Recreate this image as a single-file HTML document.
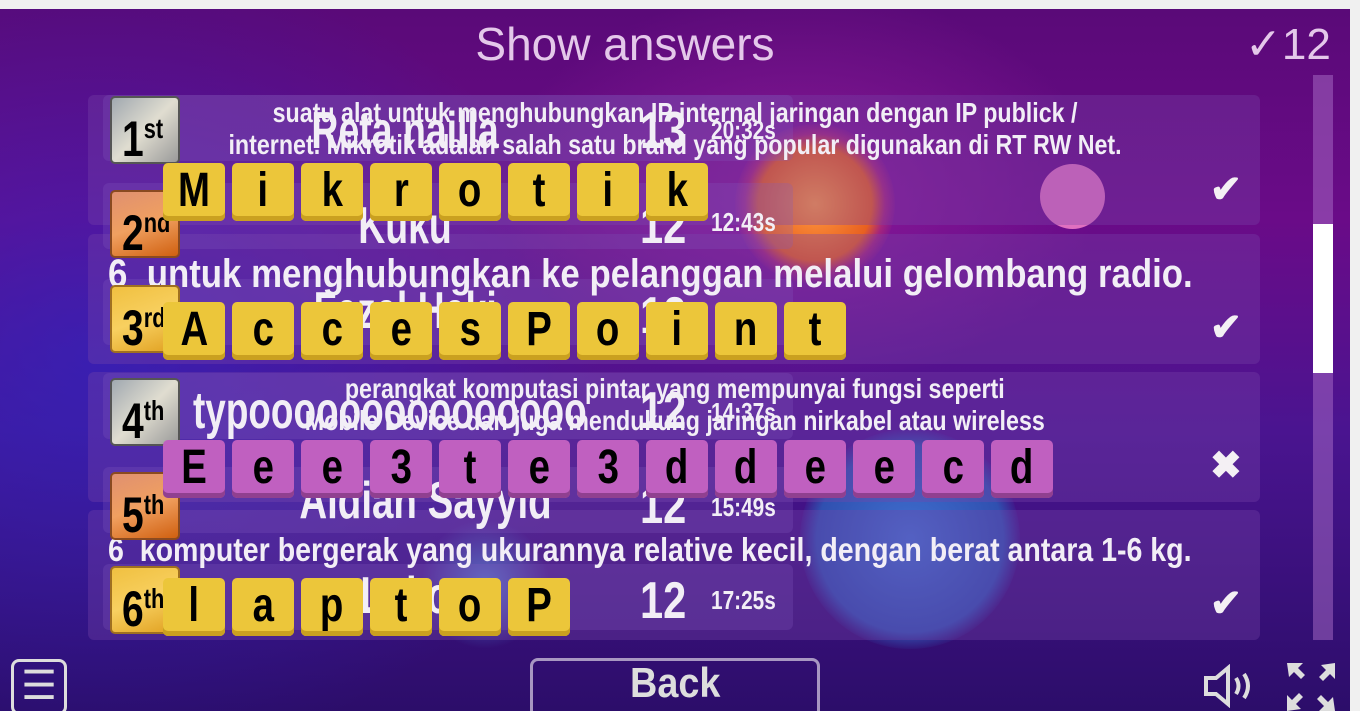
<!DOCTYPE html>
<html><head><meta charset="utf-8"><style>
*{margin:0;padding:0;box-sizing:border-box}
body{width:1360px;height:711px;overflow:hidden;background:#f0f0f0;position:relative;font-family:"Liberation Sans",sans-serif}
#g{position:absolute;left:0;top:9px;width:1350px;height:702px;overflow:hidden;
background:radial-gradient(ellipse 300px 200px at 800px 180px,rgba(170,40,170,.5),transparent),
radial-gradient(ellipse 500px 400px at 100px 350px,rgba(40,40,200,.6),transparent),
linear-gradient(180deg,#5a0a78 0%,#6a0b88 30%,#4a1490 60%,#2c0d6a 100%)}
.a{position:absolute}
.t{color:#f2eef6;font-weight:bold;white-space:nowrap;text-align:center}
.c{display:inline-block;transform:scaleX(.8);transform-origin:center}
.l{display:inline-block;transform:scaleX(.8);transform-origin:left}
.pan{position:absolute;left:88px;width:1172px;height:130px;background:rgba(120,70,170,.35);border-radius:6px}
.lb{position:absolute;left:103px;width:690px;height:66px;background:rgba(130,90,190,.25);border-radius:6px}
.b{position:absolute;left:110px;width:70px;height:68px;border-radius:5px;border:2px solid #555;font-weight:bold;font-size:50px;color:#000;padding-left:10px;line-height:62px;white-space:nowrap}
.b span{display:inline-block;transform:scaleX(.78);transform-origin:left}
.b sup{font-size:28px;vertical-align:18px}
.row{position:absolute;left:163px;display:flex;gap:7px}
.tile{width:62px;height:58px;border-radius:5px;font-weight:bold;font-size:48px;color:#000;text-align:center;line-height:56px}
.tile span{display:inline-block;transform:scaleX(.8)}
.y .tile{background:#ecc63a;box-shadow:inset 0 -5px 0 #caa020}
.p .tile{background:#c060c0;box-shadow:inset 0 -5px 0 #904090}
.ck{position:absolute;left:1210px;color:#f4f0f4;font-size:38px;font-weight:bold}
.n{font-size:52px}
.tm{font-size:26px}
</style></head><body>
<div id="g">
<div class="a" style="left:735px;top:115px;width:160px;height:160px;border-radius:50%;background:radial-gradient(circle at 50% 50%,#ff9a40,#e86020 50%,rgba(220,60,90,.4) 62%,rgba(200,50,80,0) 72%)"></div>
<div class="a" style="left:1040px;top:155px;width:65px;height:65px;border-radius:50%;background:#e070c0"></div>
<div class="a" style="left:800px;top:420px;width:220px;height:220px;border-radius:50%;background:radial-gradient(circle,#4070d0,#3050b0 60%,transparent 72%)"></div>
<div class="a" style="left:420px;top:510px;width:130px;height:130px;border-radius:50%;background:radial-gradient(circle,#4a80d0,transparent 70%)"></div>
<div class="a t" style="left:0;width:1250px;top:8px;font-weight:normal;font-size:46px;color:#e4c8ea">Show answers</div>
<div class="a t" style="left:1245px;top:10px;font-weight:normal;font-size:44px;color:#e4c8ea">✓12</div>
<div class="a" style="left:1313px;top:66px;width:20px;height:565px;background:rgba(170,110,200,.5)"></div>
<div class="a" style="left:1313px;top:215px;width:20px;height:149px;background:#fff"></div>
<div class="pan" style="top:86px"></div><div class="pan" style="top:225px"></div><div class="pan" style="top:363px"></div><div class="pan" style="top:501px"></div>
<div class="lb" style="top:86px"></div><div class="lb" style="top:174px"></div><div class="lb" style="top:270px"></div><div class="lb" style="top:364px"></div><div class="lb" style="top:458px"></div><div class="lb" style="top:555px"></div>
<div class="a t" style="left:260px;top:92px;font-size:52px;width:290px"><span class="c" style="transform:scaleX(.72)">Reta nailla</span></div>
<div class="a t" style="left:260px;top:187px;font-size:52px;width:290px"><span class="c" style="transform:scaleX(.72)">Kuku</span></div>
<div class="a t" style="left:260px;top:272px;font-size:52px;width:290px"><span class="c" style="transform:scaleX(.72)">Fazal Haki</span></div>
<div class="a t" style="left:193px;top:372px;font-size:52px"><span class="l" style="transform:scaleX(.71)">typooooooooooooooo</span></div>
<div class="a t" style="left:255px;top:462px;font-size:52px;width:300px"><span class="c" style="transform:scaleX(.74)">Aldian Sayyid</span></div>
<div class="a t" style="left:260px;top:557px;font-size:52px;width:290px"><span class="c" style="transform:scaleX(.72)">Luko</span></div>
<div class="a t n" style="left:640px;top:92px"><span class="l">13</span></div><div class="a t tm" style="left:711px;top:106px"><span class="l">20:32s</span></div>
<div class="a t n" style="left:640px;top:187px"><span class="l">12</span></div><div class="a t tm" style="left:711px;top:198px"><span class="l">12:43s</span></div>
<div class="a t n" style="left:640px;top:277px"><span class="l">12</span></div>
<div class="a t n" style="left:640px;top:372px"><span class="l">12</span></div><div class="a t tm" style="left:711px;top:388px"><span class="l">14:37s</span></div>
<div class="a t n" style="left:640px;top:467px"><span class="l">12</span></div><div class="a t tm" style="left:711px;top:483px"><span class="l">15:49s</span></div>
<div class="a t n" style="left:640px;top:562px"><span class="l">12</span></div><div class="a t tm" style="left:711px;top:576px"><span class="l">17:25s</span></div>
<div class="a t" style="left:0;width:1350px;top:88px;font-size:28px;line-height:32px"><span class="c" style="transform:scaleX(.83)">suatu alat untuk menghubungkan IP internal jaringan dengan IP publick /<br>internet. Mikrotik adalah salah satu brand yang popular digunakan di RT RW Net.</span></div>
<div class="a t" style="left:108px;top:243px;font-size:40px"><span class="l" style="transform:scaleX(.87)">6&nbsp; untuk menghubungkan ke pelanggan melalui gelombang radio.</span></div>
<div class="a t" style="left:0;width:1350px;top:364px;font-size:28px;line-height:32px"><span class="c" style="transform:scaleX(.83)">perangkat komputasi pintar yang mempunyai fungsi seperti<br>Mobile Device dan juga mendukung jaringan nirkabel atau wireless</span></div>
<div class="a t" style="left:108px;top:522px;font-size:33px"><span class="l" style="transform:scaleX(.865)">6&nbsp; komputer bergerak yang ukurannya relative kecil, dengan berat antara 1-6 kg.</span></div>
<div class="b" style="top:87px;background:linear-gradient(135deg,#a0a8b0,#e0ddd0,#9a9a9a)"><span>1<sup>st</sup></span></div>
<div class="b" style="top:181px;background:linear-gradient(160deg,#e09070,#f0a060,#d06010);border-color:#8a4a20"><span>2<sup>nd</sup></span></div>
<div class="b" style="top:276px;background:linear-gradient(160deg,#f0c040,#f8d060,#e0a020);border-color:#a07020"><span>3<sup>rd</sup></span></div>
<div class="b" style="top:369px;background:linear-gradient(135deg,#a0a8b0,#e0ddd0,#9a9a9a)"><span>4<sup>th</sup></span></div>
<div class="b" style="top:463px;background:linear-gradient(160deg,#e09070,#f0a060,#d06010);border-color:#8a4a20"><span>5<sup>th</sup></span></div>
<div class="b" style="top:557px;background:linear-gradient(160deg,#f0c040,#f8d060,#e0a020);border-color:#a07020"><span>6<sup>th</sup></span></div>
<div class="ck" style="top:158px">✔</div><div class="ck" style="top:296px">✔</div><div class="ck" style="top:434px">✖</div><div class="ck" style="top:572px">✔</div>
<div class="a" style="left:11px;top:650px;width:56px;height:56px;border:3px solid #ddd;border-radius:8px;color:#ddd;font-size:40px;text-align:center;line-height:48px">☰</div>
<div class="a" style="left:530px;top:649px;width:290px;height:60px;border:3px solid rgba(220,210,230,.7);border-radius:8px"></div>
<div class="a t" style="left:530px;width:290px;top:650px;font-size:42px;color:#ddd"><span class="c" style="transform:scaleX(.9)">Back</span></div>
<svg class="a" style="left:1200px;top:655px" width="56" height="44" viewBox="0 0 56 44"><path d="M6 14h10l12-10v36L16 30H6z" fill="none" stroke="#ddd" stroke-width="4"/><path d="M36 14q5 8 0 16M44 10q8 12 0 24" fill="none" stroke="#ddd" stroke-width="4"/></svg>
<svg class="a" style="left:1285px;top:652px" width="52" height="52" viewBox="0 0 52 52" fill="#ddd"><path d="M2 2h16l-5 5 7 7-4 4-7-7-5 5zM50 2v16l-5-5-7 7-4-4 7-7-5-5zM2 50V34l5 5 7-7 4 4-7 7 5 5zM50 50H34l5-5-7-7 4-4 7 7 5-5z"/></svg>
</div>
<div class="row y" style="top:163px"><div class="tile"><span>M</span></div><div class="tile"><span>i</span></div><div class="tile"><span>k</span></div><div class="tile"><span>r</span></div><div class="tile"><span>o</span></div><div class="tile"><span>t</span></div><div class="tile"><span>i</span></div><div class="tile"><span>k</span></div></div>
<div class="row y" style="top:302px"><div class="tile"><span>A</span></div><div class="tile"><span>c</span></div><div class="tile"><span>c</span></div><div class="tile"><span>e</span></div><div class="tile"><span>s</span></div><div class="tile"><span>P</span></div><div class="tile"><span>o</span></div><div class="tile"><span>i</span></div><div class="tile"><span>n</span></div><div class="tile"><span>t</span></div></div>
<div class="row p" style="top:440px"><div class="tile"><span>E</span></div><div class="tile"><span>e</span></div><div class="tile"><span>e</span></div><div class="tile"><span>3</span></div><div class="tile"><span>t</span></div><div class="tile"><span>e</span></div><div class="tile"><span>3</span></div><div class="tile"><span>d</span></div><div class="tile"><span>d</span></div><div class="tile"><span>e</span></div><div class="tile"><span>e</span></div><div class="tile"><span>c</span></div><div class="tile"><span>d</span></div></div>
<div class="row y" style="top:578px"><div class="tile"><span>l</span></div><div class="tile"><span>a</span></div><div class="tile"><span>p</span></div><div class="tile"><span>t</span></div><div class="tile"><span>o</span></div><div class="tile"><span>P</span></div></div>
</body></html>
